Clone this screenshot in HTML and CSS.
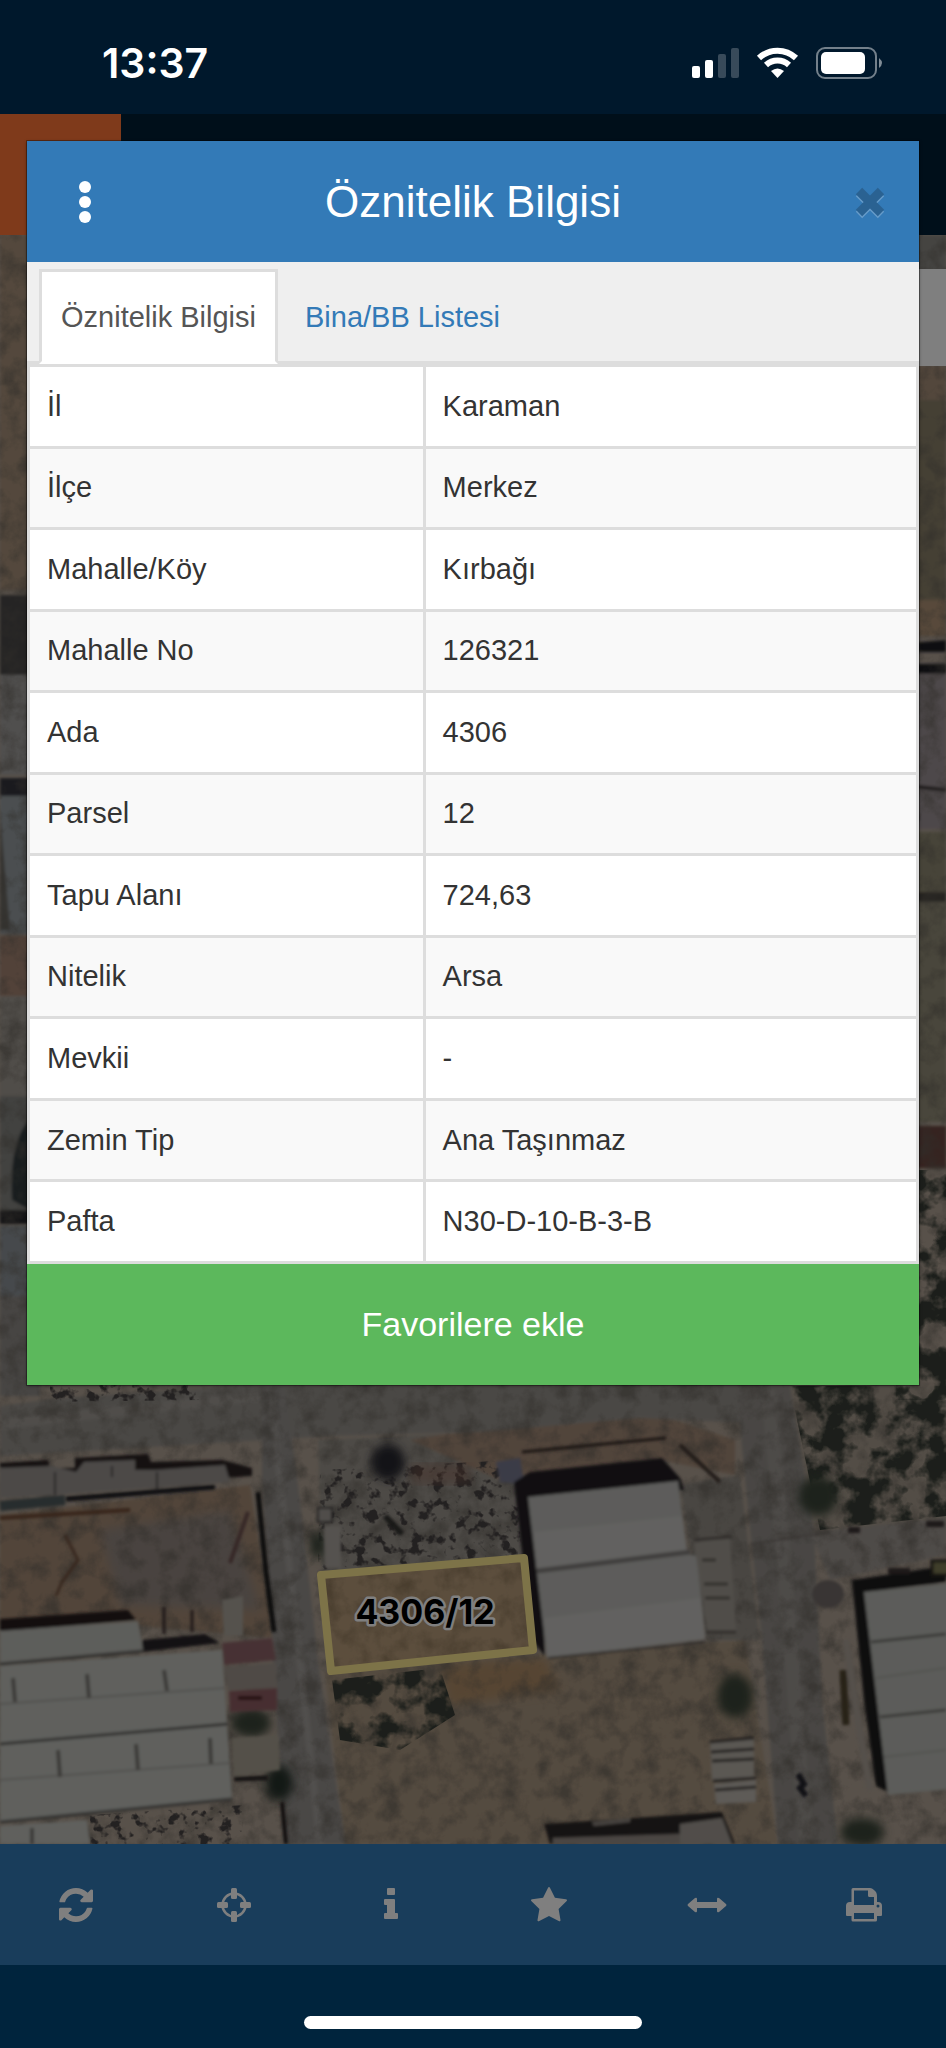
FILE: index.html
```html
<!DOCTYPE html>
<html lang="tr">
<head>
  <meta charset="UTF-8" />
  <meta name="viewport" content="width=device-width, initial-scale=1.0">
  <title>Öznitelik Bilgisi</title>
  <link rel="stylesheet" href="styles.css">
</head>
<body>
  <div class="status-bar">
    <span class="time">13:37</span>
    <svg class="status-icons" viewBox="0 0 190 32" aria-hidden="true">
      <g fill="#fff">
        <rect x="0" y="19" width="8" height="12" rx="2" />
        <rect x="13" y="13" width="8" height="18" rx="2" />
        <rect x="26" y="7" width="8" height="24" rx="2" opacity=".22" />
        <rect x="39" y="1" width="8" height="30" rx="2" opacity=".22" />
      </g>
      <g fill="none" stroke="#fff" stroke-width="6">
        <path d="M67 11 A27 27 0 0 1 104 11" />
        <path d="M74 18 A17 17 0 0 1 97 18" />
      </g>
      <path d="M79 24 Q85.500 19 92 24 L85.500 31 Z" fill="#fff" />
      <rect x="125" y="1" width="59" height="30" rx="8" fill="none" stroke="#fff" stroke-width="2" opacity=".45" />
      <rect x="129" y="5" width="44" height="22" rx="5" fill="#fff" />
      <path d="M187 11 Q193 16 187 21 Z" fill="#fff" opacity=".5" />
    </svg>
  </div>

  <div class="app">
    <header class="app-header">
      <div class="app-logo"></div>
    </header>

    <div class="map">
      <svg class="map-canvas" viewBox="0 235 946 1609" preserveAspectRatio="xMidYMax slice">
        <defs>
          <filter id="soft"><feGaussianBlur stdDeviation="1.500" /></filter>
          <filter id="blur"><feGaussianBlur stdDeviation="5" /></filter>
          <filter id="grain" x="0" y="0" width="100%" height="100%" color-interpolation-filters="sRGB">
            <feTurbulence type="fractalNoise" baseFrequency="0.05" numOctaves="5" seed="4" />
            <feColorMatrix values="0 0 0 0 0.38  0 0 0 0 0.36  0 0 0 0 0.33  2.4 0 0 0 -1" />
          </filter>
          <filter id="bush" x="0" y="0" width="100%" height="100%" color-interpolation-filters="sRGB">
            <feTurbulence type="fractalNoise" baseFrequency="0.04" numOctaves="4" seed="11" result="n" />
            <feColorMatrix in="n" values="0 0 0 0 0.22  0 0 0 0 0.24  0 0 0 0 0.21  5 0 0 0 -2.1" />
            <feComposite in2="SourceAlpha" operator="in" />
          </filter>
          <filter id="debris" x="0" y="0" width="100%" height="100%" color-interpolation-filters="sRGB">
            <feTurbulence type="fractalNoise" baseFrequency="0.09" numOctaves="3" seed="7" result="n" />
            <feColorMatrix in="n" values="0 0 0 0 0.28  0 0 0 0 0.26  0 0 0 0 0.26  7 0 0 0 -3.8" />
            <feComposite in2="SourceAlpha" operator="in" />
          </filter>
        </defs>

        <rect x="0" y="235" width="946" height="1609" fill="#b0a294" />

        <!-- west edge -->
        <g filter="url(#soft)">
          <rect x="0" y="235" width="40" height="355" fill="#a8917a" />
          <rect x="0" y="595" width="40" height="80" fill="#4c4a4a" />
          <rect x="0" y="675" width="40" height="100" fill="#a09e9c" />
          <rect x="0" y="778" width="40" height="18" fill="#34363c" />
          <path d="M0 796H40V934H0Z" fill="#969da1" />
          <path d="M0 810L10 930H0Z" fill="#6b6862" />
          <rect x="0" y="936" width="40" height="60" fill="#a48472" />
          <rect x="0" y="996" width="40" height="100" fill="#a09a92" />
          <rect x="0" y="1096" width="40" height="116" fill="#848480" />
          <path d="M40 1110Q8 1130 12 1200L40 1216Z" fill="#333a3c" />
          <rect x="0" y="1210" width="40" height="14" fill="#25272b" />
          <rect x="0" y="1226" width="40" height="70" fill="#8d9398" />
          <rect x="0" y="1296" width="40" height="100" fill="#8f8b87" />
        </g>

        <!-- east edge -->
        <g filter="url(#soft)">
          <rect x="900" y="235" width="46" height="60" fill="#8a8883" />
          <rect x="900" y="366" width="46" height="34" fill="#a68e78" />
          <rect x="900" y="400" width="46" height="200" fill="#8a8069" />
          <rect x="900" y="600" width="46" height="36" fill="#b09376" />
          <path d="M900 644L946 640V652L900 652ZM900 664H946V674H900Z" fill="#1e1e20" />
          <rect x="900" y="674" width="46" height="155" fill="#9b9194" />
          <path d="M904 690L914 720M910 790L918 820M900 785L946 790" stroke="#3a3436" stroke-width="4" />
          <rect x="900" y="832" width="46" height="60" fill="#8f8972" />
          <rect x="900" y="892" width="46" height="10" fill="#4d4843" />
          <rect x="900" y="902" width="46" height="220" fill="#938d78" />
          <rect x="900" y="1126" width="46" height="42" fill="#6c4740" />
        </g>

        <!-- open ground -->
        <g filter="url(#soft)">
          <path d="M0 1515L250 1485L274 1638L130 1625L0 1625Z" fill="#a58b75" />
          <path d="M318 1440L525 1430V1560L322 1575Z" fill="#9a948c" />
          <path d="M325 1672L540 1655L745 1640L778 1844H345Z" fill="#a99680" />
          <path d="M410 1440L480 1428L660 1415L735 1440L735 1475L660 1460L500 1480Z" fill="#a38a77" />
          <path d="M790 1386H946V1530L815 1532Z" fill="#a79b8d" />
        </g>
        <path d="M100 1530L230 1510L260 1610L120 1605Z" fill="#938780" filter="url(#blur)" />
        <path d="M440 1665L545 1658L560 1690L450 1705Z" fill="#ad8b66" filter="url(#blur)" />

        <!-- roads -->
        <g filter="url(#soft)">
          <path d="M0 1406L60 1398L240 1386H790V1425L640 1418L480 1432L330 1436L0 1456Z" fill="#95918b" />
          <path d="M0 1424L260 1396" stroke="#a09b95" stroke-width="10" />
          <path d="M262 1386H285L300 1500L318 1660L345 1844H284L272 1640L262 1480Z" fill="#94908c" />
          <path d="M270 1390L320 1844" stroke="#a29e9a" stroke-width="7" fill="none" />
          <path d="M736 1386H790L814 1530L822 1700L838 1844H778L762 1640L750 1530Z" fill="#928d88" />
          <path d="M768 1390L782 1540L806 1840" stroke="#9b9691" stroke-width="14" fill="none" />
          <path d="M810 1532L946 1518V1555L830 1580Z" fill="#9d9690" />
          <path d="M680 1485L740 1475L760 1640L706 1640Z" fill="#938d85" />
          <path d="M750 1544L830 1532" stroke="#736b66" stroke-width="2" />
        </g>

        <rect x="0" y="235" width="946" height="1609" filter="url(#grain)" opacity=".6" />

        <!-- scrub and scrap piles -->
        <path d="M790 1386H946V1516L820 1530Z" fill="#000" filter="url(#bush)" />
        <path d="M896 1170H946V1400H896Z" fill="#000" filter="url(#bush)" />
        <path d="M332 1680L440 1668L455 1715L400 1750L340 1740Z" fill="#000" filter="url(#bush)" />
        <path d="M320 1470L515 1460L522 1555L318 1570Z" fill="#000" filter="url(#debris)" />
        <path d="M90 1815L245 1805L240 1844H90Z" fill="#000" filter="url(#debris)" />
        <path d="M50 1384H200V1400L50 1402Z" fill="#000" filter="url(#debris)" />
        <g filter="url(#blur)" fill="#3b4438">
          <ellipse cx="388" cy="1462" rx="17" ry="18" fill="#28282d" />
          <ellipse cx="735" cy="1696" rx="18" ry="22" />
          <ellipse cx="279" cy="1783" rx="14" ry="18" fill="#25302c" />
          <ellipse cx="251" cy="1723" rx="20" ry="14" />
          <ellipse cx="818" cy="1496" rx="20" ry="20" />
          <ellipse cx="862" cy="1832" rx="22" ry="14" />
          <ellipse cx="318" cy="1545" rx="8" ry="13" />
        </g>
        <path d="M411 1464H470V1484H411Z" fill="#8b5b4b" opacity=".4" filter="url(#blur)" />

        <!-- sheds on the north of the left lot -->
        <g filter="url(#soft)">
          <path d="M0 1463L48 1460L50 1468H75V1458L148 1454L151 1462L222 1460L252 1468V1476L130 1484L0 1490Z" fill="#2b2024" />
          <path d="M0 1468L52 1466L76 1472L84 1462L135 1460V1470L155 1470L225 1465L230 1482L66 1494L0 1498Z" fill="#98938f" />
          <path d="M66 1499L215 1487" stroke="#1f1c20" stroke-width="5" />
          <path d="M0 1506L65 1500" stroke="#505a5c" stroke-width="10" />
          <path d="M0 1518L130 1510" stroke="#6e4a34" stroke-width="4" />
          <path d="M55 1472V1495M157 1472V1490M112 1466V1477" stroke="#4a4546" stroke-width="2" />
          <path d="M258 1492L266 1572L274 1632" stroke="#161417" stroke-width="5" fill="none" />
          <path d="M248 1512L230 1563" stroke="#6b4d4c" stroke-width="4" />
          <path d="M318 1508H332V1522H318Z" stroke="#3c3a3b" stroke-width="2" fill="#a19b95" />
          <path d="M324 1526H341V1568H325Z" fill="#aaa49e" />
          <path d="M385 1516L402 1534" stroke="#33302f" stroke-width="6" />
          <path d="M65 1535L78 1560L62 1582L56 1596" stroke="#70503c" stroke-width="3" fill="none" />
        </g>

        <!-- left warehouse -->
        <g filter="url(#soft)">
          <path d="M0 1619L128 1610L136 1620L0 1632Z" fill="#281b1d" />
          <path d="M142 1640L205 1634L220 1643L142 1652Z" fill="#282225" />
          <path d="M0 1631L138 1621L143 1650L0 1664Z" fill="#bbbcb6" />
          <path d="M0 1666L222 1650L232 1798L0 1822Z" fill="#c0c1bb" />
          <path d="M0 1826L87 1820L90 1844H0Z" fill="#c0c1bb" />
          <path d="M0 1664L142 1651M0 1744L228 1724M0 1822L232 1799" stroke="#63625e" stroke-width="3" />
          <path d="M0 1704L225 1688M0 1780L230 1763" stroke="#a2a19c" stroke-width="2" />
          <path d="M13 1678L15 1702M87 1674L89 1698M164 1670L167 1691M58 1750L60 1777M136 1744L138 1770M210 1738L211 1764M32 1828V1844" stroke="#77756f" stroke-width="4" />
          <path d="M222 1643L272 1638L276 1660L224 1665Z" fill="#8e6468" />
          <path d="M224 1667L276 1663L277 1688L228 1690Z" fill="#9e948c" />
          <path d="M229 1691L277 1688V1710L230 1712Z" fill="#8e5d62" />
          <path d="M238 1698H262" stroke="#4a1e22" stroke-width="4" />
          <path d="M222 1600L243 1596V1636H224Z" fill="#aaa59b" />
          <path d="M232 1738L278 1735L280 1770L234 1776Z" fill="#a8a192" />
          <path d="M234 1779L268 1778" stroke="#2c2827" stroke-width="5" />
          <path d="M164 1607V1634M192 1610V1632" stroke="#3e3230" stroke-width="3" />
          <path d="M282 1802L286 1844" stroke="#211d1d" stroke-width="4" />
        </g>

        <!-- centre warehouse -->
        <g filter="url(#soft)">
          <path d="M522 1452L666 1438" stroke="#362a26" stroke-width="3" />
          <path d="M496 1462L520 1458L524 1484L500 1482Z" fill="#77788f" />
          <path d="M514 1482L530 1472L662 1458L680 1478L684 1490L540 1502L545 1656L532 1640Z" fill="#211e22" />
          <path d="M528 1497L678 1481L687 1554L697 1556L705 1639L547 1658Z" fill="#bab9b6" />
          <path d="M534 1532L682 1516L687 1552L537 1571Z" fill="#c4c3c0" />
          <path d="M544 1618L701 1598L705 1639L547 1658Z" fill="#c4c3c0" />
          <path d="M537 1571L690 1552" stroke="#817e7b" stroke-width="5" />
          <path d="M548 1658L705 1642" stroke="#5c5551" stroke-width="2" />
          <path d="M694 1543L730 1537L736 1632L708 1634Z" fill="#a19b93" />
          <path d="M694 1540L732 1537M702 1560H716M704 1584H728M705 1598H730M706 1632H736" stroke="#625c57" stroke-width="3" />
          <path d="M680 1445L720 1482" stroke="#443833" stroke-width="4" />
        </g>

        <!-- east warehouse -->
        <g filter="url(#soft)">
          <path d="M852 1580L946 1566V1582L868 1592L888 1792L876 1786L864 1700Z" fill="#1d1a1d" />
          <path d="M864 1592L960 1582V1788L888 1795Z" fill="#b8b9b4" />
          <path d="M871 1642L946 1634M880 1717L946 1710" stroke="#75746f" stroke-width="3" />
          <path d="M876 1678L946 1668M884 1757L946 1750" stroke="#a5a5a0" stroke-width="2" />
          <rect x="932" y="1561" width="20" height="14" fill="#7f7c55" stroke="#2b2820" stroke-width="3" />
          <path d="M846 1640L858 1720L870 1790" stroke="#aaa096" stroke-width="7" fill="none" />
          <ellipse cx="828" cy="1594" rx="16" ry="14" fill="#726b68" />
          <path d="M848 1530H860M926 1524H944M888 1571H910" stroke="#3b3030" stroke-width="6" />
          <path d="M843 1670L846 1725" stroke="#50452f" stroke-width="7" />
        </g>

        <!-- stacked panels and south sheds -->
        <g filter="url(#soft)">
          <path d="M710 1742L754 1738V1778L712 1780Z" fill="#b6b0a7" />
          <path d="M714 1784L756 1780V1802L716 1804Z" fill="#bcb6ae" />
          <path d="M710 1742L754 1738M711 1752L754 1749M712 1761L754 1759M713 1781L756 1778M715 1790L756 1787" stroke="#403b38" stroke-width="3" />
          <path d="M544 1824L722 1812L735 1844H550Z" fill="#2b2525" />
          <path d="M680 1824L722 1818L732 1844H680Z" fill="#a29b94" />
          <path d="M553 1838L680 1834V1844H553Z" fill="#958c86" />
          <path d="M592 1822L594 1826L630 1822V1818Z" fill="#8e8680" />
          <path d="M798 1774L804 1784L800 1788L806 1796" stroke="#24242a" stroke-width="6" fill="none" />
        </g>

        <!-- selected parcel -->
        <path d="M321 1575L524 1558L533 1650L331 1671Z" fill="#d08c2e" fill-opacity=".25" stroke="#fae690" stroke-width="8" stroke-linejoin="round" />
        <text class="parcel-label" x="425" y="1624">4306/12</text>
      </svg>
      <div class="map-control"></div>
    </div>

    <nav class="toolbar">
      <button type="button" aria-label="Yenile">
        <svg class="icon" viewBox="0 0 1536 1536"><path d="M1511 928q0 5-1 7-64 268-268 434.500t-478 166.500q-146 0-282.500-55t-243.500-157l-129 129q-19 19-45 19t-45-19-19-45v-448q0-26 19-45t45-19h448q26 0 45 19t19 45-19 45l-137 137q71 66 161 102t187 36q134 0 250-65t186-179q11-17 53-117 8-23 30-23h192q13 0 22.500 9.500t9.500 22.500zm25-800v448q0 26-19 45t-45 19h-448q-26 0-45-19t-19-45 19-45l138-138q-148-137-349-137-134 0-250 65t-186 179q-11 17-53 117-8 23-30 23h-199q-13 0-22.500-9.500t-9.500-22.500v-7q65-268 270-434.500t480-166.500q146 0 284 55.500t245 156.500l130-129q19-19 45-19t45 19 19 45z" /></svg>
      </button>
      <button type="button" aria-label="Konum">
        <svg class="icon" viewBox="0 0 34 34">
          <circle cx="17" cy="17" r="11.500" fill="none" stroke="#fff" stroke-width="2.500" />
          <rect x="14" y="0" width="6" height="11" rx="1.500" />
          <rect x="14" y="23" width="6" height="11" rx="1.500" />
          <rect x="0" y="14" width="11" height="6" rx="1.500" />
          <rect x="23" y="14" width="11" height="6" rx="1.500" />
        </svg>
      </button>
      <button type="button" aria-label="Bilgi">
        <svg class="icon" viewBox="0 0 34 34">
          <rect x="13" y="0" width="8" height="7" rx="1" />
          <path d="M11 11H20Q21 11 21 12V25H23Q24 25 24 26V30Q24 31 23 31H11Q10 31 10 30V26Q10 25 11 25H13V17H11Q10 17 10 16V12Q10 11 11 11Z" />
        </svg>
      </button>
      <button type="button" aria-label="Favoriler">
        <svg class="icon icon-wide" viewBox="0 0 1664 1664"><path d="M1664 615q0 22-26 48l-363 354 86 500q1 7 1 20 0 21-10.500 35.500t-30.500 14.500q-19 0-40-12l-449-236-449 236q-22 12-40 12-21 0-31.500-14.500t-10.500-35.500q0-6 2-20l86-500-364-354q-25-27-25-48 0-37 56-46l502-73 225-455q19-41 49-41t49 41l225 455 502 73q56 9 56 46z" /></svg>
      </button>
      <button type="button" aria-label="Ölçüm">
        <svg class="icon icon-wide" viewBox="0 0 36 36"><path d="M-1 17L6 11Q8 10 8 12V15H28V12Q28 10 30 11L37 17Q38 18 37 19L30 25Q28 26 28 24V21H8V24Q8 26 6 25L-1 19Q-2 18 -1 17Z" /></svg>
      </button>
      <button type="button" aria-label="Yazdır">
        <svg class="icon icon-wide" viewBox="0 0 36 36">
          <path fill-rule="evenodd" d="M7 1H24Q26 1 28 3L30 5Q31 7 31 9V15H32Q36 15 36 19V28Q36 29 35 29H31V33Q31 34.500 29.500 34.500H7Q5.500 34.500 5.500 33V29H1Q0 29 0 28V19Q0 15 4 15H5.500V2.500Q5.500 1 7 1ZM8 3.500V18H28V10H23.500Q22 10 22 8.500V3.500ZM8 26V32H28V26ZM32 17.500A1.500 1.500 0 1 0 32 20.500A1.500 1.500 0 1 0 32 17.500Z" />
        </svg>
      </button>
    </nav>

    <div class="backdrop"></div>

    <main class="modal" role="dialog" aria-labelledby="modalTitle">
      <div class="modal-header">
        <button type="button" class="menu-button" aria-label="Menü">
          <svg viewBox="0 0 12 42"><circle cx="6" cy="6" r="6" /><circle cx="6" cy="21" r="6" /><circle cx="6" cy="36" r="6" /></svg>
        </button>
        <h1 id="modalTitle">Öznitelik Bilgisi</h1>
        <button type="button" class="close-button" aria-label="Kapat">
          <svg viewBox="0 0 30 30"><path d="M4 4L26 26M26 4L4 26" /></svg>
        </button>
      </div>

      <div class="tabs">
        <a class="tab active" href="#oznitelik">Öznitelik Bilgisi</a>
        <a class="tab" href="#bina">Bina/BB Listesi</a>
      </div>

      <table class="info-table" id="oznitelik">
        <tbody>
          <tr><th scope="row">İl</th><td>Karaman</td></tr>
          <tr><th scope="row">İlçe</th><td>Merkez</td></tr>
          <tr><th scope="row">Mahalle/Köy</th><td>Kırbağı</td></tr>
          <tr><th scope="row">Mahalle No</th><td>126321</td></tr>
          <tr><th scope="row">Ada</th><td>4306</td></tr>
          <tr><th scope="row">Parsel</th><td>12</td></tr>
          <tr><th scope="row">Tapu Alanı</th><td>724,63</td></tr>
          <tr><th scope="row">Nitelik</th><td>Arsa</td></tr>
          <tr><th scope="row">Mevkii</th><td>-</td></tr>
          <tr><th scope="row">Zemin Tip</th><td>Ana Taşınmaz</td></tr>
          <tr><th scope="row">Pafta</th><td>N30-D-10-B-3-B</td></tr>
        </tbody>
      </table>

      <button type="button" class="favorite-button">Favorilere ekle</button>
    </main>
  </div>

  <div class="home-area">
    <div class="home-indicator"></div>
  </div>
</body>
</html>
```

FILE: styles.css
```css
* {
  box-sizing: border-box;
}

body {
  display: flex;
  flex-direction: column;
  min-height: 100vh;
  margin: 0;
  font-family: "Liberation Sans", Arial, sans-serif;
  font-size: 29px;
  line-height: 41px;
  color: #333;
  background-color: #00243d;
}

button {
  padding: 0;
  border: none;
  background: none;
  font-family: inherit;
  cursor: pointer;
}

.status-bar {
  display: flex;
  justify-content: space-between;
  align-items: center;
  height: 114px;
  padding: 12px 64px 0 102px;
  background-color: #00182c;
}

.time {
  font-family: Inter, sans-serif;
  font-size: 41px;
  font-weight: 600;
  color: white;
}

.status-icons {
  width: 190px;
  height: 32px;
}

.app {
  position: relative;
  display: flex;
  flex-direction: column;
  flex: 1;
}

.app-header {
  height: 121px;
  background-color: #001e34;
}

.app-logo {
  width: 121px;
  height: 121px;
  background-color: #fe7436;
}

.map {
  position: relative;
  flex: 1;
  min-height: 1200px;
  overflow: hidden;
}

.map-canvas {
  position: absolute;
  top: 0;
  left: 0;
  width: 100%;
  height: 100%;
}

.map-control {
  position: absolute;
  top: 34px;
  right: 0;
  width: 97px;
  height: 97px;
  background-color: white;
}

.parcel-label {
  font-family: Inter, sans-serif;
  font-size: 34px;
  font-weight: 700;
  text-anchor: middle;
  fill: #000;
  stroke: #fff;
  stroke-width: 5px;
  stroke-linejoin: round;
  paint-order: stroke;
}

.toolbar {
  display: flex;
  height: 121px;
  background-color: #337ab7;
}

.toolbar button {
  display: flex;
  flex: 1;
  justify-content: center;
  align-items: center;
  padding-right: 6px;
}

.icon {
  width: 34px;
  height: 34px;
  fill: white;
  overflow: visible;
}

.icon-wide {
  width: 36px;
  height: 36px;
}

.backdrop {
  position: absolute;
  top: 0;
  right: 0;
  bottom: 0;
  left: 0;
  background-color: rgba(0, 0, 0, 0.5);
}

.modal {
  position: absolute;
  top: 27px;
  left: 27px;
  right: 27px;
  background-color: white;
  box-shadow: 0 0 0 1px rgba(0, 0, 0, 0.3), 0 1px 3px rgba(0, 0, 0, 0.5);
}

.modal-header {
  display: flex;
  justify-content: space-between;
  align-items: center;
  height: 121px;
  padding: 0 28px;
  background-color: #337ab7;
  color: white;
}

.modal-header h1 {
  margin: 0;
  font-size: 44px;
  font-weight: normal;
}

.modal-header button {
  display: flex;
  justify-content: center;
  align-items: center;
  width: 60px;
  height: 60px;
}

.menu-button svg {
  width: 12px;
  height: 42px;
  fill: white;
}

.close-button svg {
  width: 30px;
  height: 30px;
  margin-left: 18px;
  overflow: visible;
  fill: none;
  stroke: #2a6292;
  stroke-width: 9px;
  filter: drop-shadow(0 2px 0 rgba(255, 255, 255, 0.25));
}

.tabs {
  display: flex;
  gap: 5px;
  padding: 7px 12px 0;
  background-color: #efefef;
  border-bottom: 3px solid #ddd;
}

.tab {
  margin-bottom: -3px;
  padding: 25px 19px 23px;
  border: 3px solid transparent;
  color: #337ab7;
  text-decoration: none;
}

.tab.active {
  border-color: #ddd;
  border-bottom-color: white;
  background-color: white;
  color: #555;
}

.info-table {
  width: 100%;
  height: 900px;
  border-collapse: collapse;
  table-layout: fixed;
}

.info-table th,
.info-table td {
  padding: 18px 17px;
  border: 3px solid #ddd;
  text-align: left;
  font-weight: normal;
}

.info-table th {
  width: 44.5%;
}

.info-table tr:nth-child(even) {
  background-color: #f9f9f9;
}

.favorite-button {
  display: block;
  width: 100%;
  height: 121px;
  background-color: #5cb85c;
  color: white;
  font-size: 34px;
}

.home-area {
  display: flex;
  justify-content: center;
  height: 83px;
  padding-top: 51px;
}

.home-indicator {
  width: 338px;
  height: 13px;
  border-radius: 7px;
  background-color: white;
}
```
